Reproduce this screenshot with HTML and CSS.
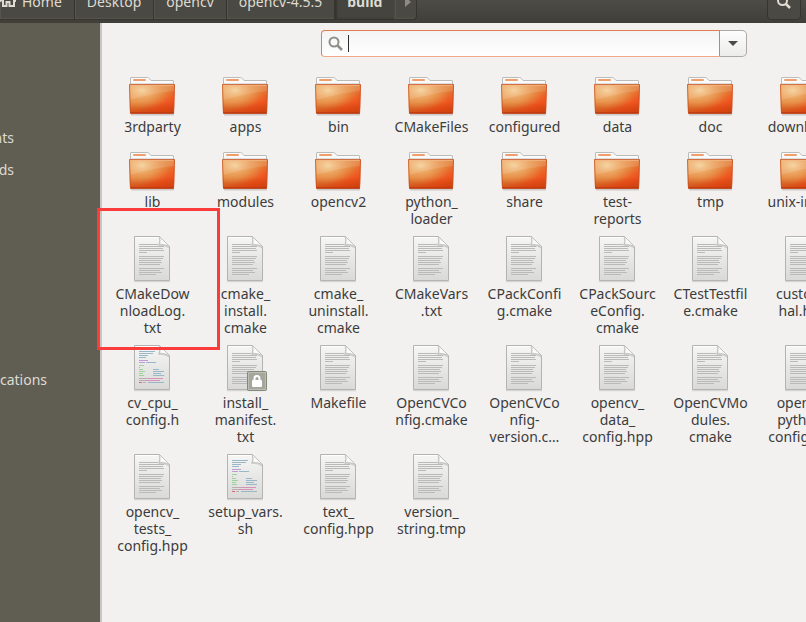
FILE: index.html
```
<!DOCTYPE html>
<html lang="en">
<head>
<meta charset="utf-8">
<title>build</title>
<link rel="stylesheet" href="styles.css">
</head>
<body>
<svg class="defs" aria-hidden="true">
  <defs>
    <linearGradient id="gFront" x1="0" y1="0" x2="1" y2="1">
      <stop offset="0" stop-color="#e89a50"/><stop offset=".5" stop-color="#e2803a"/><stop offset=".75" stop-color="#f0541e"/><stop offset="1" stop-color="#cf4a16"/>
    </linearGradient>
    <radialGradient id="gGlow" cx=".28" cy=".2" r=".65">
      <stop offset="0" stop-color="#f6d6a0" stop-opacity=".9"/><stop offset="1" stop-color="#f0a050" stop-opacity="0"/>
    </radialGradient>
    <linearGradient id="gShade" x1="0" y1="0" x2="0" y2="1">
      <stop offset=".6" stop-color="#c83c0c" stop-opacity="0"/><stop offset="1" stop-color="#d03c08" stop-opacity=".75"/>
    </linearGradient>
    <linearGradient id="gPage" x1="0" y1="0" x2="0" y2="1">
      <stop offset="0" stop-color="#f6f6f5"/><stop offset="1" stop-color="#d9d9d8"/>
    </linearGradient>
    <linearGradient id="gFold" x1="0" y1="1" x2="1" y2="0">
      <stop offset="0" stop-color="#c4c4c2"/><stop offset=".35" stop-color="#fff"/><stop offset="1" stop-color="#d4d4d2"/>
    </linearGradient>
  </defs>
  <symbol id="folder" viewBox="0 0 49 48">
    <path d="M3 46.800H46" stroke="#000" stroke-opacity=".16" stroke-width="1.600"/>
    <path d="M2.500 20V10Q2.500 9.500 3 9.500H19.500Q20.500 9.500 21 10.200L23 12.500H45Q45.500 12.500 45.500 13V20Z" fill="#fafafa" stroke="#bbbbb9"/>
    <path d="M3 15.500H45" stroke="#dededc"/>
    <rect x="5" y="11" width="13" height="2" rx="1" fill="#ef9e6c"/>
    <path d="M1 16.500H47L46 45.500H2Z" fill="url(#gFront)"/>
    <path d="M1 16.500H47L46 45.500H2Z" fill="url(#gShade)"/>
    <path d="M1 16.500H47L46 45.500H2Z" fill="url(#gGlow)"/>
    <path d="M2 17H46V23Q26 25 2 32Z" fill="#fff" fill-opacity=".12"/>
    <path d="M1.500 16.500H46.500L45.500 45H2.500Z" fill="none" stroke="#c55428" stroke-opacity=".75"/>
    <path d="M3 17.500H45.500" stroke="#f6b685" stroke-opacity=".7"/>
    <path d="M2.500 45H45.500" stroke="#b2300b"/>
  </symbol>
  <symbol id="page" viewBox="0 0 49 48">
    <path d="M6 46.700H42" stroke="#000" stroke-opacity=".14"/>
    <path d="M6.500 1.500H31.500L41.500 11.500V45.500H6.500Z" fill="url(#gPage)" stroke="#b3b3b1"/>
    <path d="M7.500 2.500H31" stroke="#fff"/>
  </symbol>
  <symbol id="fold" viewBox="0 0 49 48">
    <path d="M30.500 2Q32 6 30 11Q36 10 41 13.500V11.500L31.500 2Z" fill="#777" fill-opacity=".25"/>
    <path d="M31.500 1.500Q33 6 31 10Q36 8.500 41.500 11.500Z" fill="url(#gFold)" stroke="#bcbcba" stroke-width=".8"/>
  </symbol>
  <symbol id="text" viewBox="0 0 49 48">
    <use href="#page" width="49" height="48"/>
    <path stroke="#bababa" d="M11 9.500H30M11 11.500H36M11 13.500H35M11 15.500H36M11 17.500H19M11 21.500H36M11 23.500H35M11 25.500H33M11 27.500H34M11 29.500H32M11 33.500H36M11 35.500H32M11 37.500H34M11 39.500H28"/>
    <use href="#fold" width="49" height="48"/>
  </symbol>
  <symbol id="code" viewBox="0 0 49 48">
    <use href="#page" width="49" height="48"/>
    <path stroke="#98b8ca" d="M11 7.500H27M11 9.500H25M11 11.500H20M11 13.500H18M18 18.500H28M25 25.500H31M25 27.500H36M25 29.500H33M25 31.500H36M20 38.500H36"/>
    <path stroke="#bf9bd6" d="M11 16.500H20M11 18.500H17"/>
    <path stroke="#9fd29b" d="M11 21.500H16M11 25.500H15M11 27.500H17M11 29.500H15M11 31.500H16"/>
    <path stroke="#d792b8" d="M20 34.500H35M18 36.500H32"/>
    <path stroke="#b9adb3" d="M11 23.500H12M11 34.500H20M11 36.500H18M15 38.500H18"/>
    <path stroke="#e0636c" d="M11 38.500H14"/>
    <use href="#fold" width="49" height="48"/>
  </symbol>
  <symbol id="locked" viewBox="0 0 49 48">
    <use href="#text" width="49" height="48"/>
    <rect x="26.500" y="27.500" width="19" height="19" rx="1" fill="#a5a79c" stroke="#858779"/>
    <path d="M27.500 28.500H44.500V45.500H27.500Z" fill="none" stroke="#bcbdb4"/>
    <path d="M33.500 37V34.500A2.500 2.500 0 0 1 38.500 34.500V37" fill="none" stroke="#fff" stroke-width="2"/>
    <rect x="31" y="36" width="10" height="7" rx="1" fill="#fff"/>
  </symbol>
</svg>

<header class="toolbar">
  <nav class="path" aria-label="Path">
    <button class="crumb home"><svg width="16" height="16" viewBox="0 0 16 16" aria-hidden="true"><path d="M0 7.500L8 0L16 7.500" fill="none" stroke="#dfdbd2" stroke-width="2"/><path d="M3 6V12H6.500V8H9.500V12H14V6" fill="none" stroke="#dfdbd2" stroke-width="2"/></svg>Home</button>
    <button class="crumb">Desktop</button>
    <button class="crumb">opencv</button>
    <button class="crumb">opencv-4.5.5</button>
    <button class="crumb current">build</button>
    <button class="crumb next" aria-label="Next"><svg width="6" height="10" viewBox="0 0 6 10"><path d="M0 0L6 5L0 10Z" fill="#8d8b84"/></svg></button>
  </nav>
  <button class="find" aria-label="Search"><svg width="16" height="16" viewBox="0 0 16 16"><path d="M9.500 9.500L14 14" stroke="#dfdbd2" stroke-width="2.500"/><circle cx="6.500" cy="6.500" r="4.500" fill="none" stroke="#dfdbd2" stroke-width="2"/></svg></button>
</header>

<div class="window">
  <aside class="sidebar">
    <ul class="places">
      <li><a href="#">nts</a></li>
      <li><a href="#">ds</a></li>
    </ul>
    <ul class="places other">
      <li><a href="#">cations</a></li>
    </ul>
  </aside>

  <main class="content">
    <form class="search">
      <label class="entry">
        <svg width="16" height="16" viewBox="0 0 16 16" aria-hidden="true"><path d="M9.500 9.500L14 14" stroke="#8f8e8b" stroke-width="2.500"/><circle cx="6" cy="6" r="4.500" fill="none" stroke="#8f8e8b" stroke-width="2"/></svg>
        <span class="caret"></span>
        <input type="text" aria-label="Search files">
      </label>
      <button type="button" class="drop" aria-label="Filters"><svg width="10" height="5" viewBox="0 0 10 5"><path d="M0 0H10L5 5Z" fill="#4a4a48"/></svg></button>
    </form>

    <ul class="files">
      <li><svg class="icon"><use href="#folder"/></svg><a href="#">3rdparty</a></li>
      <li><svg class="icon"><use href="#folder"/></svg><a href="#">apps</a></li>
      <li><svg class="icon"><use href="#folder"/></svg><a href="#">bin</a></li>
      <li><svg class="icon"><use href="#folder"/></svg><a href="#">CMakeFiles</a></li>
      <li><svg class="icon"><use href="#folder"/></svg><a href="#">configured</a></li>
      <li><svg class="icon"><use href="#folder"/></svg><a href="#">data</a></li>
      <li><svg class="icon"><use href="#folder"/></svg><a href="#">doc</a></li>
      <li><svg class="icon"><use href="#folder"/></svg><a href="#">downloads</a></li>

      <li><svg class="icon"><use href="#folder"/></svg><a href="#">lib</a></li>
      <li><svg class="icon"><use href="#folder"/></svg><a href="#">modules</a></li>
      <li><svg class="icon"><use href="#folder"/></svg><a href="#">opencv2</a></li>
      <li><svg class="icon"><use href="#folder"/></svg><a href="#">python_<br>loader</a></li>
      <li><svg class="icon"><use href="#folder"/></svg><a href="#">share</a></li>
      <li><svg class="icon"><use href="#folder"/></svg><a href="#">test-<br>reports</a></li>
      <li><svg class="icon"><use href="#folder"/></svg><a href="#">tmp</a></li>
      <li><svg class="icon"><use href="#folder"/></svg><a href="#">unix-install</a></li>

      <li class="marked"><svg class="icon"><use href="#text"/></svg><a href="#">CMakeDow<br>nloadLog.<br>txt</a></li>
      <li><svg class="icon"><use href="#text"/></svg><a href="#">cmake_<br>install.<br>cmake</a></li>
      <li><svg class="icon"><use href="#text"/></svg><a href="#">cmake_<br>uninstall.<br>cmake</a></li>
      <li><svg class="icon"><use href="#text"/></svg><a href="#">CMakeVars<br>.txt</a></li>
      <li><svg class="icon"><use href="#text"/></svg><a href="#">CPackConfi<br>g.cmake</a></li>
      <li><svg class="icon"><use href="#text"/></svg><a href="#">CPackSourc<br>eConfig.<br>cmake</a></li>
      <li><svg class="icon"><use href="#text"/></svg><a href="#">CTestTestfil<br>e.cmake</a></li>
      <li><svg class="icon"><use href="#text"/></svg><a href="#">custom_<br>hal.hpp</a></li>

      <li><svg class="icon"><use href="#code"/></svg><a href="#">cv_cpu_<br>config.h</a></li>
      <li><svg class="icon"><use href="#locked"/></svg><a href="#">install_<br>manifest.<br>txt</a></li>
      <li><svg class="icon"><use href="#text"/></svg><a href="#">Makefile</a></li>
      <li><svg class="icon"><use href="#text"/></svg><a href="#">OpenCVCo<br>nfig.cmake</a></li>
      <li><svg class="icon"><use href="#text"/></svg><a href="#">OpenCVCo<br>nfig-<br>version.c…</a></li>
      <li><svg class="icon"><use href="#text"/></svg><a href="#">opencv_<br>data_<br>config.hpp</a></li>
      <li><svg class="icon"><use href="#text"/></svg><a href="#">OpenCVMo<br>dules.<br>cmake</a></li>
      <li><svg class="icon"><use href="#text"/></svg><a href="#">opencv_<br>python_<br>config.hpp</a></li>

      <li><svg class="icon"><use href="#text"/></svg><a href="#">opencv_<br>tests_<br>config.hpp</a></li>
      <li><svg class="icon"><use href="#code"/></svg><a href="#">setup_vars.<br>sh</a></li>
      <li><svg class="icon"><use href="#text"/></svg><a href="#">text_<br>config.hpp</a></li>
      <li><svg class="icon"><use href="#text"/></svg><a href="#">version_<br>string.tmp</a></li>
    </ul>
  </main>
</div>
</body>
</html>
```
FILE: styles.css
```
*, *::before, *::after { box-sizing: border-box; }

body {
  margin: 0;
  min-height: 100vh;
  display: flex;
  flex-direction: column;
  overflow: hidden;
  background: #f2f1f0;
  color: #3c3c3c;
  font: 14px/17px "Noto Sans", "Open Sans", sans-serif;
}

ul { list-style: none; margin: 0; padding: 0; }
a { color: inherit; text-decoration: none; }
button { font: inherit; color: inherit; }
.defs { position: absolute; width: 0; height: 0; }

/* Path bar, scrolled partly above the top of the window */
.toolbar {
  height: 23px;
  flex: none;
  display: flex;
  align-items: flex-end;
  justify-content: space-between;
  padding: 0 5px 3px 0;
  background: linear-gradient(#4d4c46, #3f3e39);
  color: #dfdbd2;
}
.path { display: flex; }
.crumb {
  height: 36px;
  display: flex;
  align-items: center;
  padding: 0 12px;
  border: solid #35342f;
  border-width: 0 1px 1px 0;
  background: #4a4943;
  box-shadow: inset 1px -1px #55544d;
}
.home { gap: 6px; padding-left: 0; }
.current { background: #45443f; font-weight: bold; box-shadow: inset 2px 0 2px #35342f; border-right-color: #4a4943; }
.next { padding: 0 5px 0 10px; border-radius: 0 0 4px 0; }
.find {
  width: 34px;
  height: 36px;
  padding: 0;
  display: grid;
  place-items: center;
  border: 1px solid #35342f;
  border-radius: 4px;
  background: #4a4943;
}

.window { flex: 1; display: flex; }
.sidebar {
  width: 102px;
  flex: none;
  padding-top: 106px;
  border-right: 2px solid #c8c6c2;
  background: #605e52;
  color: #dedbd2;
}
.places { width: 14px; }
.places li { display: flex; justify-content: flex-end; padding-bottom: 15px; }
.other { width: 47px; margin-top: 178px; }

.content { flex: 1; min-width: 0; }
.search { display: flex; width: 426px; height: 27px; margin: 7px 0 0 219px; }
.entry {
  flex: 1;
  display: flex;
  align-items: center;
  padding-left: 6px;
  border: 1px solid #e27c50;
  border-bottom-color: #f0a88c;
  border-radius: 4px 0 0 4px;
  background: linear-gradient(#f4f4f4, #fff);
}
.caret { width: 1px; height: 17px; margin-left: 4px; background: #2c2c2c; }
.entry input { flex: 1; min-width: 0; border: 0; padding: 0; background: none; outline: 0; font: inherit; }
.drop {
  width: 27px;
  padding: 0;
  display: grid;
  place-items: center;
  border: 1px solid #aaa9a6;
  border-left: 0;
  border-radius: 0 5px 5px 0;
  background: linear-gradient(#fdfdfd, #ececeb);
}

.files {
  display: grid;
  grid-template-columns: repeat(8, 93px);
  row-gap: 8px;
  padding: 11px 0 0 4px;
}
.files li {
  position: relative;
  display: flex;
  flex-direction: column;
  align-items: center;
  gap: 2px;
  text-align: center;
  white-space: nowrap;
}
.icon { width: 49px; height: 48px; }

/* Highlight rectangle drawn over the marked file */
.marked::after {
  content: "";
  position: absolute;
  z-index: 1;
  left: -9px;
  top: -27px;
  width: 123px;
  height: 142px;
  border: 3px solid #fc3b3b;
}
```
